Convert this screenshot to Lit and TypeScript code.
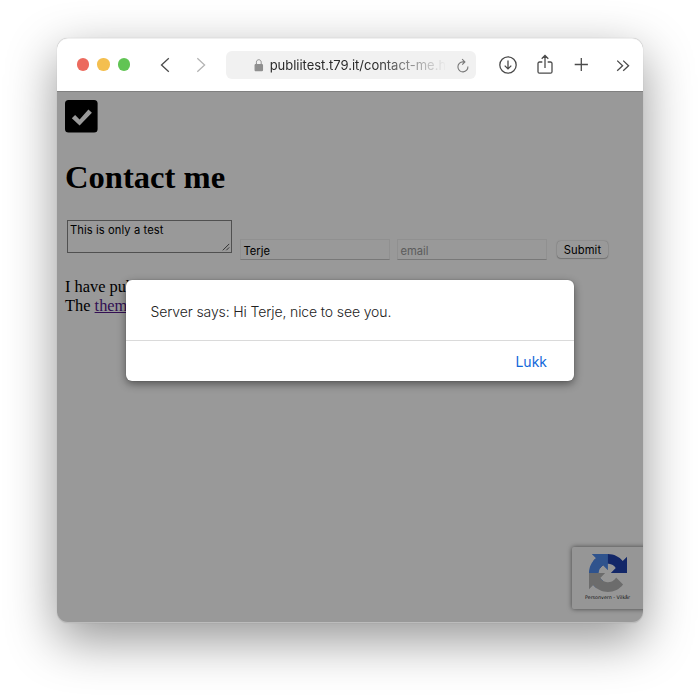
import { LitElement, html, css } from "lit";
import { customElement, property } from "lit/decorators.js";

@customElement("browser-toolbar")
class BrowserToolbar extends LitElement {
  @property() url = "";

  static styles = css`
    :host {
      display: flex;
      align-items: center;
      box-sizing: border-box;
      height: 54px;
      padding-left: 20px;
      background: #fff;
      border-bottom: 1px solid #808080;
      font-family: Inter, "Liberation Sans", sans-serif;
    }
    .lights { display: flex; gap: 8px; }
    .light { width: 12.4px; height: 12.4px; border-radius: 50%; background: #ec6a5e; }
    .light.min { background: #f4bf4f; }
    .light.max { background: #61c454; }
    svg { display: block; fill: none; flex: none; stroke: #4b4b4b; stroke-width: 1.3; }
    .nav { display: flex; gap: 20px; margin-left: 27px; }
    .nav .off { stroke: #b4b4b4; }
    .address {
      display: flex;
      align-items: center;
      box-sizing: border-box;
      width: 250px;
      height: 28px;
      margin-left: 17px;
      padding: 0 6px 0 28px;
      border-radius: 6px;
      background: #f1f1f1;
    }
    .lock { position: relative; top: 0.5px; fill: #8f8f8f; stroke: #8f8f8f; }
    .url {
      width: 176px;
      margin-left: 5.5px;
      padding-top: 1px;
      overflow: hidden;
      white-space: nowrap;
      font-size: 13px;
      line-height: 20px;
      letter-spacing: -0.02px;
      color: #2a2a2a;
      -webkit-mask-image: linear-gradient(90deg, #000 60%, transparent 101%);
      mask-image: linear-gradient(90deg, #000 60%, transparent 101%);
    }
    .reload { position: relative; top: 1px; margin-left: 11px; stroke: #777; stroke-width: 1.1; }
    .actions { display: flex; align-items: center; margin-left: 22px; }
    .share { margin-left: 19px; }
    .plus { margin-left: 20px; }
    .more { margin-left: 26px; }
  `;

  render() {
    return html`
      <div class="lights">
        <div class="light"></div>
        <div class="light min"></div>
        <div class="light max"></div>
      </div>
      <div class="nav">
        <svg width="16" height="18" viewBox="0 0 16 18"><path d="M11.8 2.2 4.5 9l7.300 6.800" /></svg>
        <svg class="off" width="16" height="18" viewBox="0 0 16 18"><path d="m4.300 2.200 7.300 6.800-7.300 6.800" /></svg>
      </div>
      <div class="address">
        <svg class="lock" width="10" height="14" viewBox="0 0 10 14">
          <rect x="1.2" y="6.6" width="7.2" height="6" rx=".6" />
          <path fill="none" stroke-width="1" d="M2.4 6.5V4.2C2.4.9 7.2.9 7.2 4.2v2.3" />
        </svg>
        <div class="url">${this.url}</div>
        <svg class="reload" width="14" height="16" viewBox="0 0 14 16">
          <path d="M11.9 8.500A5 5 0 1 1 6.900 3.900h1.700M6.100 1.200l2.800 2.700-2.700 2.700" />
        </svg>
      </div>
      <div class="actions">
        <svg width="20" height="20" viewBox="0 0 20 20">
          <circle cx="10" cy="10" r="8.2" />
          <path d="M10 5.4v8.4M6.7 10.6l3.3 3.3 3.3-3.3" />
        </svg>
        <svg class="share" width="16" height="22" viewBox="0 0 16 22">
          <path d="M5.3 8H2.5A1.5 1.5 0 0 0 1 9.5v8.2a1.5 1.5 0 0 0 1.5 1.5h11a1.5 1.5 0 0 0 1.5-1.5V9.5A1.5 1.5 0 0 0 13.5 8h-2.8M8 14V1.8M4.7 4.8 8 1.5l3.3 3.3" />
        </svg>
        <svg class="plus" width="16" height="16" viewBox="0 0 16 16"><path d="M8.300.9v13.200M1.700 7.500h13.200" /></svg>
        <svg class="more" width="16" height="14" viewBox="0 0 16 14">
          <path d="m2.200 2.600 5.400 5.100-5.400 5.100M8.200 2.600l5.400 5.100-5.400 5.100" />
        </svg>
      </div>
    `;
  }
}

@customElement("contact-page")
class ContactPage extends LitElement {
  static styles = css`
    :host {
      display: block;
      position: relative;
      box-sizing: border-box;
      height: 531px;
      padding: 8px;
      overflow: hidden;
      background: #fff;
      color: #000;
      font: 16.4px/18.6px "Liberation Serif", serif;
    }
    .logo { display: block; width: 33px; height: 33px; }
    h1 { margin: 24px 0 0; font-size: 32.6px; line-height: 40px; font-weight: 700; }
    form {
      display: flex;
      align-items: flex-end;
      height: 40px;
      margin: 23px 0 0 2px;
      font: 11.2px/13px Inter, "Liberation Sans", sans-serif;
    }
    .area {
      position: relative;
      align-self: flex-start;
      box-sizing: border-box;
      width: 165px;
      height: 33px;
      padding: 3px 2px;
      border: 1px solid #858585;
      letter-spacing: 0.08px;
    }
    .grip { position: absolute; right: 1px; bottom: 1px; stroke: #555; fill: none; }
    .field {
      box-sizing: border-box;
      width: 150px;
      height: 21px;
      margin-left: 8px;
      padding: 5px 2.5px 3px;
      border: 1px solid #f1f1f1;
      border-bottom-color: #c8c8c8;
    }
    .field.email { margin-left: 7px; color: #9a9a9a; }
    .submit {
      box-sizing: border-box;
      width: 51px;
      height: 17px;
      margin: 0 0 2px 10px;
      border-radius: 4px;
      box-shadow: 0 0 1.5px rgba(0, 0, 0, 0.35), 0 1px 1px rgba(0, 0, 0, 0.2);
      text-align: center;
      line-height: 19px;
      letter-spacing: 0.1px;
    }
    p { margin: 18px 0 0; white-space: nowrap; }
    a { color: #551a8b; text-decoration: underline; }
    .badge {
      position: absolute;
      left: 515px;
      top: 455px;
      box-sizing: border-box;
      width: 256px;
      height: 62px;
      padding: 7px 0 0 7px;
      border-radius: 2px;
      background: #fbfbfb;
      box-shadow: 0 0 5px #707070;
    }
    .badge-col { display: flex; flex-direction: column; align-items: center; width: 57px; }
    .terms {
      margin-top: 2px;
      white-space: nowrap;
      color: #222;
      font: 4.8px/8px "DejaVu Sans", sans-serif;
    }
    .shade { position: absolute; inset: 0; background: rgba(0, 0, 0, 0.4); }
  `;

  render() {
    return html`
      <svg class="logo" viewBox="0 0 33 33">
        <rect width="32.600" height="32.600" rx="3.500" />
        <path fill="#fff" d="m6.800 18.200 3.300-3.200 4.500 4.500L23.400 9.600l3.500 3.200L14.600 25.400z" />
      </svg>
      <h1>Contact me</h1>
      <form>
        <div class="area">
          This is only a test
          <svg class="grip" width="8" height="8" viewBox="0 0 8 8"><path d="M.8 7.3 7.2.9M4.3 7.3l2.9-2.9" /></svg>
        </div>
        <div class="field">Terje</div>
        <div class="field email">email</div>
        <div class="submit">Submit</div>
      </form>
      <p>I have publii<br />The <a>theme</a></p>
      <div class="badge">
        <div class="badge-col">
          <svg width="38" height="38" viewBox="0 0 64 64">
            <path fill="#2142ad" d="M64 31.955l-.033-1.37V4.687l-7.16 7.16C50.948 4.674 42.033.093 32.05.093c-10.4 0-19.622 4.96-25.458 12.64l11.736 11.86a15.55 15.55 0 0 1 4.754-5.334c2.05-1.6 4.952-2.906 8.968-2.906.485 0 .86.057 1.135.163 4.976.393 9.288 3.14 11.828 7.124l-8.307 8.307L64 31.953" />
            <path fill="#4f8bec" d="M31.862.094l-1.37.033H4.594l7.16 7.16C4.58 13.147 0 22.06 0 32.046c0 10.4 4.96 19.622 12.64 25.458L24.5 45.768a15.55 15.55 0 0 1-5.334-4.754c-1.6-2.05-2.906-4.952-2.906-8.968 0-.485.057-.86.163-1.135.393-4.976 3.14-9.288 7.124-11.828l8.307 8.307L31.86.095" />
            <path fill="#b5b5b5" d="M.001 32.045l.033 1.37v25.898l7.16-7.16c5.86 7.173 14.774 11.754 24.76 11.754 10.4 0 19.622-4.96 25.458-12.64l-11.736-11.86a15.55 15.55 0 0 1-4.754 5.334c-2.05 1.6-4.952 2.906-8.968 2.906-.485 0-.86-.057-1.135-.163-4.976-.393-9.288-3.14-11.828-7.124l8.307-8.307c-10.522.04-22.4.066-27.295-.005" />
          </svg>
          <div class="terms">Personvern - Vilkår</div>
        </div>
      </div>
      <div class="shade"></div>
    `;
  }
}

@customElement("alert-dialog")
class AlertDialog extends LitElement {
  @property() message = "";
  @property() action = "";

  static styles = css`
    :host {
      display: block;
      height: 101px;
      border-radius: 6px;
      background: #fff;
      box-shadow: 0 0 1px rgba(0, 0, 0, 0.4), 0 3px 9px rgba(0, 0, 0, 0.45);
      font: 14px/20px Inter, "Liberation Sans", sans-serif;
    }
    .message {
      box-sizing: border-box;
      height: 61px;
      padding: 22px 24.5px 0;
      border-bottom: 1px solid #dadada;
      font-weight: 300;
      color: #222;
      letter-spacing: -0.12px;
      white-space: nowrap;
    }
    .buttons { padding: 11px 27px 0; text-align: right; color: #1268da; }
  `;

  render() {
    return html`
      <div class="message">${this.message}</div>
      <div class="buttons">${this.action}</div>
    `;
  }
}

@customElement("app-root")
class AppRoot extends LitElement {
  static styles = css`
    :host {
      display: block;
      box-sizing: border-box;
      width: 700px;
      height: 698px;
      padding: 38px 57px 0;
      overflow: hidden;
      background: #fff;
    }
    .window {
      position: relative;
      width: 586px;
      height: 585px;
      border-radius: 11px;
      box-shadow: 0 0 1px rgba(0, 0, 0, 0.2), 0 17px 50px rgba(0, 0, 0, 0.42);
    }
    .clip { height: 585px; overflow: hidden; border-radius: 11px; background: #999; }
    .frame {
      position: absolute;
      inset: 0;
      border-radius: 11px;
      box-shadow: inset 0 -1px 0 rgba(255, 255, 255, 0.35), inset 0 1px 0 rgba(0, 0, 0, 0.06);
      pointer-events: none;
    }
    alert-dialog { position: absolute; left: 69px; top: 242px; width: 448px; }
  `;

  render() {
    return html`
      <div class="window">
        <div class="clip">
          <browser-toolbar url="publiitest.t79.it/contact-me.html"></browser-toolbar>
          <contact-page></contact-page>
        </div>
        <div class="frame"></div>
        <alert-dialog message="Server says: Hi Terje, nice to see you." action="Lukk"></alert-dialog>
      </div>
    `;
  }
}
